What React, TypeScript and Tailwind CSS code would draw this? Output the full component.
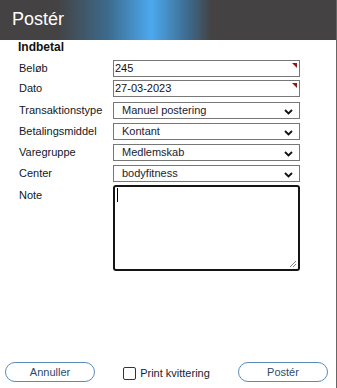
import React from "react";

const Chevron = () => (
  <svg width="9" height="6" viewBox="0 0 9 6" className="absolute right-[6px] top-[6px]">
    <path d="M1 1 L4.5 4.5 L8 1" fill="none" stroke="#111" strokeWidth="1.8" />
  </svg>
);

const Corner = () => (
  <svg width="5" height="5" viewBox="0 0 5 5" className="absolute right-[2px] top-[2px]">
    <polygon points="0,0 5,0 5,5" fill="#8b1a1a" />
  </svg>
);

function Row({ label, children, mt }: { label: string; children: React.ReactNode; mt: string }) {
  return (
    <div className={`flex items-center ${mt}`}>
      <div className="w-[94px] text-[11px] text-[#111827]">{label}</div>
      {children}
    </div>
  );
}

export default function App() {
  const font = { fontFamily: '"Liberation Sans", Arial, sans-serif' };
  return (
    <div style={font} className="w-[337px] h-[388px] bg-white flex flex-col border-r border-[#666] overflow-hidden">
      <div className="h-[40px] shrink-0 flex items-center pl-[12px] bg-[linear-gradient(90deg,#444242_17%,#3d6a8c_32%,#4ca9ee_45%,#3d6a8c_56%,#444242_63%)]">
        <span className="text-white text-[18px] leading-none mt-[-2px]">Postér</span>
      </div>
      <div className="pl-[19px] flex flex-col">
        <div className="text-[12px] font-bold text-[#111] leading-[14px] mt-[0px] ml-[-1px]">Indbetal</div>
        <Row label="Beløb" mt="mt-[6px]">
          <div className="relative w-[187px] h-[17px] border border-[#777] text-[11px] leading-[15px] pl-[1px] text-[#111]">
            245
            <Corner />
          </div>
        </Row>
        <Row label="Dato" mt="mt-[3px]">
          <div className="relative w-[187px] h-[17px] border border-[#777] text-[11px] leading-[15px] pl-[1px] text-[#111]">
            27-03-2023
            <Corner />
          </div>
        </Row>
        {[
          ["Transaktionstype", "Manuel postering", "mt-[5px]"],
          ["Betalingsmiddel", "Kontant", "mt-[4px]"],
          ["Varegruppe", "Medlemskab", "mt-[4px]"],
          ["Center", "bodyfitness", "mt-[4px]"],
        ].map(([l, v, m]) => (
          <Row key={l} label={l} mt={m}>
            <div className="relative w-[187px] h-[17px] border border-[#777] text-[11px] leading-[15px] pl-[8px] text-[#1a2233]">
              {v}
              <Chevron />
            </div>
          </Row>
        ))}
        <div className="flex items-start mt-[3px]">
          <div className="w-[94px] text-[11px] text-[#111827] mt-[2px]">Note</div>
          <div className="relative w-[187px] h-[86px] border-2 border-[#151515] rounded-[3px]">
            <div className="absolute left-[2px] top-[1px] w-[1px] h-[14px] bg-black" />
            <svg width="9" height="9" viewBox="0 0 9 9" className="absolute right-[1px] bottom-[1px]">
              <path d="M8 2 L2 8 M8 5 L5 8" stroke="#888" strokeWidth="1" />
            </svg>
          </div>
        </div>
      </div>
      <div className="flex-1" />
      <div className="flex items-center justify-between pl-[5px] pr-[8px] pb-[6px]">
        <button className="w-[90px] h-[20px] rounded-full border-[1.5px] border-[#5a8cba] text-[11px] text-[#2c4a6e] bg-white">
          Annuller
        </button>
        <label className="flex items-center gap-[4px] text-[11px] text-[#1a2233] mt-[3px]">
          <span className="w-[13px] h-[13px] border border-[#333] rounded-[2px] bg-white" />
          Print kvittering
        </label>
        <button className="w-[90px] h-[20px] rounded-full border-[1.5px] border-[#5a8cba] text-[11px] text-[#2c4a6e] bg-white">
          Postér
        </button>
      </div>
    </div>
  );
}
